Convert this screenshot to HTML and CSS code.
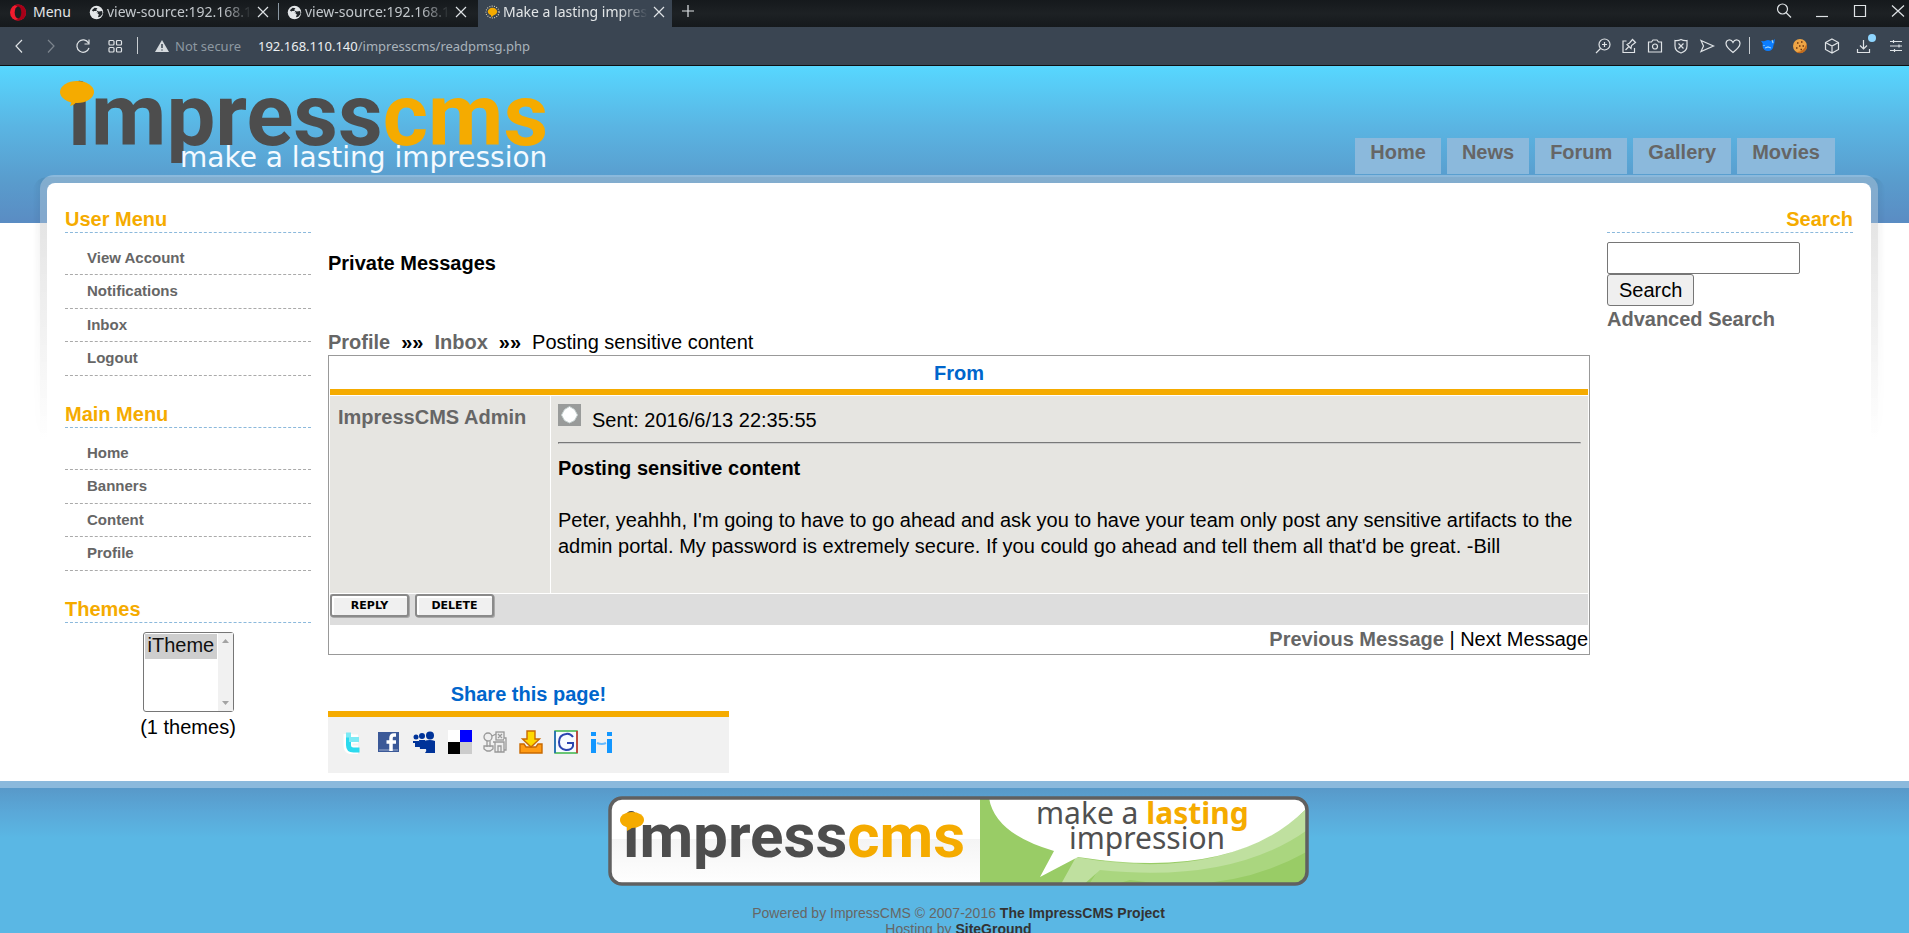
FILE: index.html
```html
<!DOCTYPE html>
<html lang="en">
<head>
<meta charset="utf-8">
<title>Make a lasting impression</title>
<link rel="stylesheet" href="styles.css">
</head>
<body>
<svg class="defs" width="0" height="0" aria-hidden="true">
  <symbol id="x" viewBox="0 0 16 16"><path d="M3 3l10 10M13 3L3 13"/></symbol>
  <symbol id="globe" viewBox="0 0 16 16"><circle cx="8" cy="8" r="7.2" fill="#e3e6e8" stroke="none"/><path d="M3 5.500l3-2.500 3 .5-1.500 2 3 1.500 3.500-.5.5 3-2.500 3-2.500.5 1-3-3-2.500-3-.5z" fill="#202529" stroke="none"/><path d="M5 7h3l1 1.500" stroke="#e3e6e8"/></symbol>
</svg>
<div class="window">
  <div class="tabbar">
    <button class="opera"><svg width="16" height="17" viewBox="0 0 16 17" aria-hidden="true"><ellipse cx="8" cy="8.500" rx="8" ry="8" fill="#f01c2e"/><path d="M8 .5a8 8 0 010 16c-3 0-3-1-3-1 6 2 6-14 0-14 0 0 0-1 3-1z" fill="#a70018"/><ellipse cx="8" cy="8.500" rx="3.300" ry="6" fill="#1a1d20"/></svg>Menu</button>
    <div class="tabs">
      <div class="tab"><svg class="fav"><use href="#globe"/></svg><span class="tab-title">view-source:192.168.110.140</span><button class="close" aria-label="Close tab"><svg class="ic"><use href="#x"/></svg></button></div>
      <div class="tab split"><svg class="fav"><use href="#globe"/></svg><span class="tab-title">view-source:192.168.110.140</span><button class="close" aria-label="Close tab"><svg class="ic"><use href="#x"/></svg></button></div>
      <div class="tab active"><svg class="fav" viewBox="0 0 16 16"><ellipse cx="8" cy="7.500" rx="7" ry="6.300" stroke="#e8e0c8" stroke-dasharray="1 1.500"/><ellipse cx="8" cy="7" rx="5" ry="4" fill="#f5ab00" stroke="none"/><path d="M6 10l1 3 3-3z" fill="#f5ab00" stroke="none"/></svg><span class="tab-title">Make a lasting impression</span><button class="close" aria-label="Close tab"><svg class="ic"><use href="#x"/></svg></button></div>
    </div>
    <button class="newtab" aria-label="New tab"><svg class="ic" viewBox="0 0 16 16"><path d="M8 2v12M2 8h12"/></svg></button>
    <div class="winctl">
      <button aria-label="Search tabs"><svg class="ic" viewBox="0 0 16 16"><circle cx="6.500" cy="6" r="5"/><path d="M10 9.500l5 5"/></svg></button>
      <button aria-label="Minimize"><svg class="ic" viewBox="0 0 16 16"><path d="M2 13.500h12"/></svg></button>
      <button aria-label="Maximize"><svg class="ic" viewBox="0 0 16 16"><path d="M2.500 2.500h11v11h-11z"/></svg></button>
      <button aria-label="Close"><svg class="ic" viewBox="0 0 16 16"><path d="M2 2.500l12 11M14 2.500l-12 11"/></svg></button>
    </div>
  </div>
  <div class="toolbar">
    <div class="navbtns">
      <button aria-label="Back"><svg class="ic" viewBox="0 0 16 16"><path d="M11 2L5 8l6 6.500"/></svg></button>
      <button class="dim" aria-label="Forward"><svg class="ic" viewBox="0 0 16 16"><path d="M5 2l6 6-6 6.500"/></svg></button>
      <button aria-label="Reload"><svg class="ic" viewBox="0 0 16 16"><path d="M13.500 5A6.200 6.200 0 1014 10M14 1.500V6H9.500"/></svg></button>
      <button aria-label="Speed dial"><svg class="ic" viewBox="0 0 16 16"><rect x="2" y="2.500" width="5" height="4.500" rx="1"/><rect x="9.500" y="2.500" width="5" height="4.500" rx="1"/><rect x="2" y="9.500" width="5" height="4.500" rx="1"/><rect x="9.500" y="9.500" width="5" height="4.500" rx="1"/></svg></button>
    </div>
    <span class="sep"></span>
    <div class="address">
      <svg class="warn" viewBox="0 0 14 12" aria-hidden="true"><path d="M7 0l7 12H0z" fill="#d5dade"/><path d="M7 4v4M7 9.500v1" stroke="#3a4552" stroke-width="1.500"/></svg>
      <span class="insecure">Not secure</span>
      <span class="url"><b>192.168.110.140</b>/impresscms/readpmsg.php</span>
    </div>
    <div class="tools">
      <button aria-label="Zoom"><svg class="ic" viewBox="0 0 16 16"><circle cx="9.500" cy="6.500" r="5.500"/><path d="M5.500 10.500L1 15M7 6.500h5M9.500 4v5"/></svg></button>
      <button aria-label="Edit"><svg class="ic" viewBox="0 0 16 16"><path d="M5.500 3H2v11.500h11.500V10M4.500 12l3-3M6 6.500l4 4 .5-3 4-3-3-3-3 3.500z"/></svg></button>
      <button aria-label="Snapshot"><svg class="ic" viewBox="0 0 16 16"><path d="M1.500 4h3L6 2h4l1.500 2h3v10h-13z"/><circle cx="8" cy="8.500" r="2.500"/></svg></button>
      <button aria-label="Blocker"><svg class="ic" viewBox="0 0 16 16"><path d="M8 1.500q3 1.500 6 1V8q0 5-6 7-6-2-6-7V2.500q3 .5 6-1zM5.500 5.500l5 5M10.500 5.500l-5 5"/></svg></button>
      <button aria-label="Send"><svg class="ic" viewBox="0 0 16 16"><path d="M2 2.500L14.500 8 2 13.500 4.500 8z"/></svg></button>
      <button aria-label="Favorite"><svg class="ic" viewBox="0 0 16 16"><path d="M8 14.500Q1 9 1 5.500C1 1.500 6 .5 8 4.500c2-4 7-3 7 1Q15 9 8 14.500z"/></svg></button>
    </div>
    <span class="sep"></span>
    <div class="tools wide">
      <button aria-label="Extension"><svg class="ic" viewBox="0 0 16 16"><circle cx="8" cy="7.500" r="5.500" fill="#0b7dff" stroke="none"/><path d="M1 3l5 .5-2 4zM15 1l-1 6-3-3z" fill="#0b7dff" stroke="none"/><path d="M5 10l3-1 3 1M12 2l1 3M4 7v1" stroke="#9ad4ff"/></svg></button>
      <button aria-label="Cookies"><svg class="ic" viewBox="0 0 16 16"><circle cx="8" cy="8" r="7" fill="#eda445" stroke="none"/><path d="M14.500 6A7 7 0 014 14q7 1 10.500-8z" fill="#c26a1c" stroke="none"/><path d="M5 5h1.500M9 4h1.500M7 8h1.500M4 10h1.500M10.500 8H12M8.500 11.500H10" stroke="#6b3510" stroke-width="1.500"/></svg></button>
      <button aria-label="Extensions"><svg class="ic" viewBox="0 0 16 16"><path d="M8 1l6.500 3.500v7L8 15l-6.500-3.500v-7zM1.500 4.500L8 8l6.500-3.500M8 8v7"/></svg></button>
      <button class="download" aria-label="Downloads"><svg class="ic" viewBox="0 0 16 16"><path d="M7.500 2v9M4 7.500L7.500 11 11 7.500M1.500 11v3.500h12V11"/></svg><i class="dot"></i></button>
      <button aria-label="Settings"><svg class="ic" viewBox="0 0 16 16"><path d="M2 3.500h12M2 8h12M2 12.500h12M5.500 2v3M11 6.500v3M6.500 11v3"/></svg></button>
    </div>
  </div>

  <div class="page">
    <header class="header">
      <a class="logo" href="#" aria-label="ImpressCMS home">
        <svg width="490" height="98" viewBox="0 0 490 98">
          <text class="brand" x="8" y="69" font-size="87"><tspan fill="#4d4d4d">impress</tspan><tspan fill="#f5ab00">cms</tspan></text>
          <ellipse cx="17" cy="16" rx="17" ry="11" fill="#f5ab00"/><path d="M11 24l6 1q-2 4-7 5 2-3 1-6z" fill="#f5ab00"/>
          <text class="tagline" x="120" y="91" font-size="28">make a lasting impression</text>
        </svg>
      </a>
      <nav class="topnav">
        <a href="#">Home</a><a href="#">News</a><a href="#">Forum</a><a href="#">Gallery</a><a href="#">Movies</a>
      </nav>
    </header>

    <div class="frame">
      <div class="content">
        <aside class="side">
          <section>
            <h2>User Menu</h2>
            <ul class="menu"><li><a href="#">View Account</a></li><li><a href="#">Notifications</a></li><li><a href="#">Inbox</a></li><li><a href="#">Logout</a></li></ul>
          </section>
          <section>
            <h2>Main Menu</h2>
            <ul class="menu"><li><a href="#">Home</a></li><li><a href="#">Banners</a></li><li><a href="#">Content</a></li><li><a href="#">Profile</a></li></ul>
          </section>
          <section>
            <h2><label for="theme">Themes</label></h2>
            <div class="themes">
              <div class="listbox">
                <select id="theme" size="3"><option selected>iTheme</option></select>
                <span class="track"><svg width="7" height="4" viewBox="0 0 7 4"><path d="M0 4l3.500-4L7 4z" fill="#a3a3a3"/></svg><svg width="7" height="4" viewBox="0 0 7 4"><path d="M0 0l3.500 4L7 0z" fill="#a3a3a3"/></svg></span>
              </div>
              <p>(1 themes)</p>
            </div>
          </section>
        </aside>

        <main class="main">
          <h1>Private Messages</h1>
          <div class="crumbs"><a href="#">Profile</a><b>»»</b><a href="#">Inbox</a><b>»»</b><span>Posting sensitive content</span></div>
          <table class="message">
            <thead><tr><th colspan="2">From</th></tr></thead>
            <tbody>
              <tr>
                <td class="cell from"><a href="#">ImpressCMS Admin</a></td>
                <td class="cell">
                  <div class="sent"><svg width="23" height="22" viewBox="0 0 23 22" aria-hidden="true"><rect width="23" height="22" fill="#999b9a"/><path d="M11.500 2.500l5 3 3 5.500-3 5.500-5 2.500-5-2.500-3-5.500 3-5.500z" fill="#fff" stroke="#c5d0cf"/></svg><span>Sent: 2016/6/13 22:35:55</span></div>
                  <hr>
                  <h3>Posting sensitive content</h3>
                  <p>Peter, yeahhh, I'm going to have to go ahead and ask you to have your team only post any sensitive artifacts to the admin portal. My password is extremely secure. If you could go ahead and tell them all that'd be great. -Bill</p>
                </td>
              </tr>
              <tr><td class="actions" colspan="2"><div><button class="pix">REPLY</button><button class="pix">DELETE</button></div></td></tr>
              <tr><td class="pager" colspan="2"><a href="#">Previous Message</a> | Next Message</td></tr>
            </tbody>
          </table>
          <section class="share">
            <h2>Share this page!</h2>
            <div class="links">
              <a href="#" aria-label="Twitter"><svg viewBox="0 0 24 24"><path d="M7 4v12q0 4 5 4h5M8 9h9" stroke="#fff" stroke-width="9" stroke-linejoin="round" fill="none"/><path d="M7.500 3v12q0 5 5 5h6" stroke="#2cdaee" stroke-width="5" fill="none"/><path d="M5 5h5M8 9.500h10" stroke="#7eeaf5" stroke-width="5"/></svg></a>
              <a href="#" aria-label="Facebook"><svg viewBox="0 0 24 24"><rect x="1" y="2" width="21" height="20" fill="#3b5998"/><path d="M2 20h19" stroke="#6d84b4" stroke-width="2"/><path d="M19 5h-2q-3 0-3 3v13M9.500 12H19" stroke="#fff" stroke-width="3.500" fill="none"/></svg></a>
              <a href="#" aria-label="MySpace"><svg viewBox="0 0 24 24" fill="#003399"><circle cx="4" cy="7" r="2.500"/><circle cx="10" cy="6" r="3"/><circle cx="18" cy="5.500" r="4"/><path d="M1 11h6l1 6H3v-4H1zM7 10h6l1 9H8zM12 11q6-2 11 0v12H13q2-2 1-4-2-3-2-8z"/></svg></a>
              <a href="#" aria-label="Delicious"><svg viewBox="0 0 24 24"><path d="M0 0h12v12H0z" fill="#fff"/><path d="M12 0h12v12H12z" fill="#00f"/><path d="M0 12h12v12H0z"/><path d="M12 12h12v12H12z" fill="#ccc"/></svg></a>
              <a href="#" aria-label="Digg"><svg viewBox="0 0 24 24" fill="#eee" stroke="#999" stroke-width="1.300"><circle cx="5" cy="7" r="4"/><rect x="13" y="2" width="8" height="8"/><path d="M15 4l4 4M19 4l-4 4M9 6l4-2M4 11v6M7 11v6M1 16h9v3l-3 2H4l-3-2zM12 12h9v10h-9zM15 22v-6h3v6M21 8h2v12h-2M10 12h2"/></svg></a>
              <a href="#" aria-label="Download"><svg viewBox="0 0 24 24" stroke="#c96a00" stroke-width="1.400"><path d="M1 14h4l2 3h10l2-3h4v9H1z" fill="#ff9b13"/><path d="M8 1h8v8h4.500L12 17 3.500 9H8z" fill="#ffd800"/></svg></a>
              <a href="#" aria-label="Google"><svg viewBox="0 0 24 24" fill="none" stroke-width="1.500"><path d="M1 1h22v22H1z" fill="#f8fbff" stroke="#3cb54a"/><path d="M1 1v22" stroke="#1b5dc9"/><path d="M23 1v22" stroke="#d8242f"/><path d="M19 7q-3-4-7-3-7 1-7 8t7 8q6 0 7-4v-3h-6" stroke="#2b45b0" stroke-width="2"/></svg></a>
              <a href="#" aria-label="Hi5"><svg viewBox="0 0 24 24" fill="#1397ff"><path d="M1 2h5v4H1zM1 9h5v14H1zM17 2h5v4h-5zM17 9h5v14h-5z"/><path d="M7 13q5 2 9 0" fill="none" stroke="#66bbff" stroke-width="2"/></svg></a>
            </div>
          </section>
        </main>

        <aside class="side">
          <section>
            <h2 class="right"><label for="q">Search</label></h2>
            <form class="search"><input id="q" type="text"><button type="button">Search</button><a href="#">Advanced Search</a></form>
          </section>
        </aside>
      </div>
    </div>

    <footer class="footer">
      <svg class="banner" width="702" height="90" viewBox="0 0 702 90" aria-label="ImpressCMS, make a lasting impression">
        <defs>
          <clipPath id="clip"><rect x="2" y="2" width="697" height="86" rx="12"/></clipPath>
          <linearGradient id="fade" x2="0" y2="1"><stop offset="0" stop-color="#f4f4f4"/><stop offset="1" stop-color="#fff"/></linearGradient>
        </defs>
        <g clip-path="url(#clip)">
          <rect width="372" height="90" fill="#fff"/><rect y="43" width="372" height="47" fill="url(#fade)"/>
          <rect x="372" width="330" height="90" fill="#99cc66"/>
          <path d="M480 90l18-28q120 25 204-32v24q-80 46-180 30l-20 6z" fill="#aad67f"/>
          <path d="M452 90l16-29q150 28 234-51v22q-76 56-210 42l-18 16z" fill="#bfe09f"/>
          <path d="M381 2q6 36 65 53l-14 26 38-20q155 24 227-47L702 0z" fill="#fff"/>
        </g>
        <rect x="2" y="2" width="697" height="86" rx="12" fill="none" stroke="#606060" stroke-width="3.500"/>
        <text class="brand" x="15" y="61" font-size="62"><tspan fill="#4d4d4d">impress</tspan><tspan fill="#f5ab00">cms</tspan></text>
        <ellipse cx="24" cy="24" rx="12" ry="8" fill="#f5ab00"/><path d="M19 30l6 1q-2 2-6 4z" fill="#f5ab00"/>
        <text class="slogan" x="428" y="28" font-size="30">make a <tspan class="strong">lasting</tspan></text>
        <text class="slogan" x="461" y="53" font-size="30">impression</text>
      </svg>
      <p>Powered by ImpressCMS © 2007-2016 <a href="#">The ImpressCMS Project</a><br>Hosting by <a href="#">SiteGround</a></p>
    </footer>
  </div>
</div>
</body>
</html>
```
FILE: styles.css
```css
* { box-sizing: border-box; }
body { margin: 0; font: 20px/26px "Liberation Sans", Arial, sans-serif; color: #000; background: #fff; }
h1, h2, h3, p, ul { margin: 0; padding: 0; font-size: inherit; }
a { color: #666; font-weight: bold; text-decoration: none; }
button { font: inherit; color: inherit; padding: 0; border: 0; background: none; }
.defs { position: absolute; }
.window { display: flex; flex-direction: column; height: 100vh; overflow: hidden; }

/* browser chrome */
.tabbar, .toolbar { display: flex; flex: none; align-items: center; font-family: "Noto Sans", sans-serif; color: #e3e6e8; }
.tabbar { height: 27px; padding-right: 3px; font-size: 14px; line-height: 24px; background: linear-gradient(#15191c, #1d2124 50%, #15191c); }
.tabbar svg, .toolbar svg { display: block; flex: none; fill: none; stroke: #dfe3e6; stroke-width: 1.2; }
.opera svg { stroke: none; }
.ic { width: 16px; height: 16px; }
.fav { width: 15px; height: 15px; }
.opera { display: flex; align-items: center; gap: 7px; width: 82px; padding-left: 10px; height: 24px; align-self: flex-start; }
.tabs { display: flex; gap: 4px; align-self: stretch; }
.tab { position: relative; display: flex; align-items: center; gap: 3px; width: 194px; padding: 0 5px 3px 7px; color: #c3c8cc; }
.tab.active { background: #3a4552; color: #e3e6e8; }
.tab.split::before { content: ""; position: absolute; left: -2px; top: 3px; width: 1px; height: 17px; background: #8b98a3; }
.tab-title { flex: 1; overflow: hidden; white-space: nowrap; mask-image: linear-gradient(to right, #000 80%, transparent 100%); }
.newtab { margin-left: 8px; align-self: flex-start; padding-top: 3px; }
.winctl { display: flex; gap: 22px; margin-left: auto; align-self: flex-start; padding-top: 3px; }
.toolbar { height: 39px; padding: 0 5px 1px 11px; background: #3a4552; border-bottom: 1px solid #0d1013; font-size: 13px; line-height: 18px; }
.navbtns { display: flex; gap: 16px; }
.dim { opacity: .4; }
.sep { width: 1px; height: 17px; margin: 0 10px 0 8px; background: #c9ced2; }
.navbtns + .sep { margin: 0 17px 0 14px; }
.address { display: flex; flex: 1; align-items: center; }
.toolbar .warn { width: 14px; height: 12px; stroke: none; margin-right: 6px; }
.insecure { width: 83px; color: #8d98a1; }
.url { color: #a9b3bb; }
.url b { font-weight: normal; color: #eceff1; }
.tools { display: flex; gap: 10px; }
.tools.wide { gap: 16px; }
.download { position: relative; }
.dot { position: absolute; right: -4px; top: -4px; width: 8px; height: 8px; border-radius: 50%; background: #8fd6ff; }

/* site header */
.page { flex: 1; min-height: 0; overflow: hidden; background: linear-gradient(#57d7ff 0, #5ab5e3 60px, #599ccd 115px, #5a8cc3 157px, #fff 157px); }
.header { display: flex; justify-content: space-between; align-items: flex-end; height: 109px; padding: 0 74px 1px 60px; }
.logo svg { display: block; }
.brand { font-family: Roboto, sans-serif; font-weight: bold; }
.tagline { font-family: "DejaVu Sans", sans-serif; fill: #f4faff; font-weight: normal; }
.topnav { display: flex; gap: 6px; }
.topnav a { height: 36px; padding: 1px 15px 0; background: #8bb9dc; }

/* content frame */
.frame { position: relative; z-index: 0; margin: 0 31px 0 40px; padding: 8px 7px 0; border-radius: 14px 14px 0 0; background: linear-gradient(#8bb9dc 0, #8bb1d8 48px, #f1f1f1 48px, #fff 265px); }
.frame::before { content: ""; position: absolute; z-index: -1; inset: 2px -7px auto; height: 265px; border-radius: 14px; background: linear-gradient(to right, transparent, rgba(0, 0, 0, .06) 8px calc(100% - 8px), transparent); mask-image: linear-gradient(#000, transparent); }
.content { display: grid; grid-template-columns: 246px minmax(0, 1fr) 246px; gap: 17px; padding: 22px 18px 8px; border-radius: 8px 8px 0 0; background: #fff; }
.side h2 { height: 28px; padding-top: 1px; color: #f5ab00; border-bottom: 1px dashed #8bb9dc; }
.side section { margin-bottom: 24px; }
.right { text-align: right; }
.menu { list-style: none; padding-top: 9px; }
.menu li { padding: 3px 0 3px 22px; font-size: 15px; border-bottom: 1px dashed #aaa; }
.menu li:nth-child(even) { padding-bottom: 4px; }
.menu a { display: block; }
.themes { padding-top: 9px; text-align: center; }
.listbox { position: relative; width: 91px; height: 80px; margin: 0 auto; }
.listbox select { display: block; width: 100%; height: 100%; padding: 1px 16px 0 1px; border: 1px solid #767676; border-radius: 3px; font: inherit; background: #fff; overflow: hidden; }
.listbox option { height: 25px; padding: 0 3px; line-height: 25px; }
.track { position: absolute; inset: 1px 1px 1px auto; width: 15px; padding: 6px 0; display: flex; flex-direction: column; align-items: center; justify-content: space-between; background: #f1f1f1; pointer-events: none; }
.themes p { padding-top: 2px; }
.search { display: flex; flex-direction: column; align-items: flex-start; padding-top: 9px; }
.search input { width: 193px; height: 32px; border: 1px solid #767676; border-radius: 2px; font: inherit; }
.search button { height: 32px; padding: 0 11px; border: 1px solid #767676; border-radius: 3px; background: #efefef; }

/* private message */
.main h1 { padding: 45px 0 53px; }
.crumbs { display: flex; gap: 11px; }
.message { width: 100%; border: 1px solid #999; border-spacing: 1px; }
.message th { padding: 3px; color: #06c; border-bottom: 6px solid #f5ab00; }
.message td { padding: 0; }
.message .cell { padding: 8px 7px; vertical-align: top; background: #e6e5e1; }
.message .from { width: 220px; padding-left: 8px; }
.sent { display: flex; gap: 11px; }
.sent span { padding-top: 3px; }
.cell hr { margin: 9px 0 11px; border: 1px inset #ccc; }
.cell p { padding: 26px 0; }
.actions { background: #ddd; }
.actions div { display: flex; gap: 6px; padding-bottom: 8px; }
.pix { width: 79px; height: 23px; border: 2px solid #8a8a8a; border-radius: 3px; font: bold 11px/18px "DejaVu Sans", sans-serif; color: #000; background: #f0f0f0; box-shadow: inset 2px 2px #fff, 1px 1px #aaa; }
.message .pager { padding-bottom: 1px; text-align: right; }
.share { width: 401px; margin-top: 26px; }
.share h2 { padding-bottom: 4px; text-align: center; color: #06c; border-bottom: 6px solid #f5ab00; }
.links { height: 56px; padding: 10px; background: #f1f1f1; }
.links a { display: inline-block; padding: 3px; }
.links svg { display: block; width: 24px; height: 24px; }

/* footer */
.footer { padding: 8px 0 0 8px; border-top: 7px solid #8bb9dc; text-align: center; font-size: 14px; line-height: 16px; color: #666; background: linear-gradient(#5899c9, #5aa8d8 24px, #5ab7e4 50px); }
.banner { display: block; margin: 0 auto 19px; }
.slogan { font-family: "Noto Sans", sans-serif; fill: #505050; }
.slogan .strong { fill: #f5ab00; font-weight: bold; }
.footer a { color: #333; }
```
